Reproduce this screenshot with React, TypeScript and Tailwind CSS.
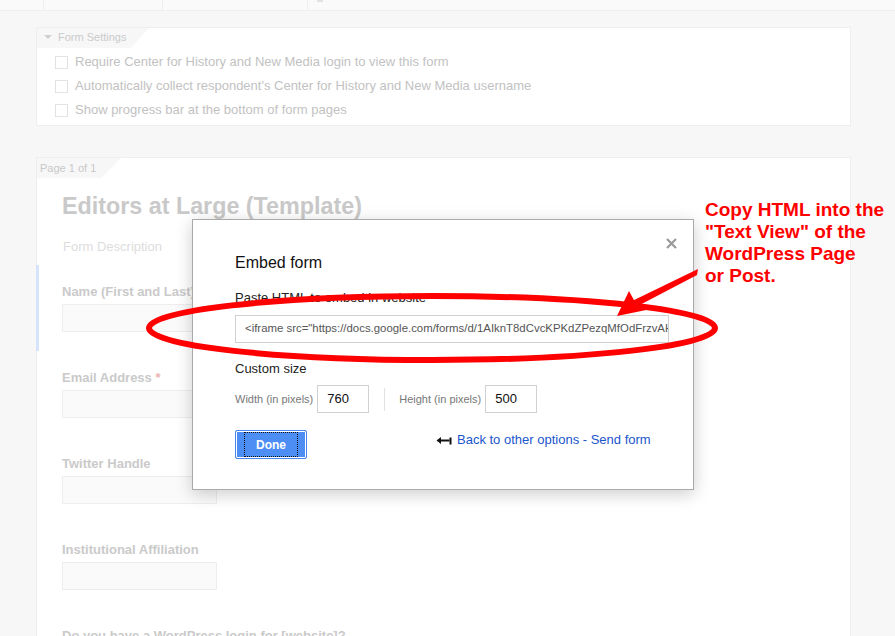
import React from "react";

const Field = ({ label, star }: { label: string; star?: boolean }) => (
  <div className="h-[86px] pt-[19px] pl-[25px]">
    <div className="h-[16px] leading-[16px] text-[13px] font-bold text-[#cacaca] whitespace-nowrap">
      {label}
      {star && <span className="text-[#eab3b3]"> *</span>}
    </div>
    <div className="mt-[4px] h-[28px] w-[155px] bg-[#fafafa] border border-[#eeeeee]" />
  </div>
);

const Check = ({ text }: { text: string }) => (
  <div className="flex items-center h-[24px]">
    <div className="w-[13px] h-[13px] border border-[#e2e2e2] bg-white" />
    <span className="ml-[7px] text-[13px] text-[#c2c2c2]">{text}</span>
  </div>
);

export default function App() {
  return (
    <div className="relative w-[895px] h-[636px] overflow-hidden bg-[#f7f7f7] font-['Liberation_Sans',Arial,sans-serif]">
      {/* top bar */}
      <div className="h-[11px] bg-[#fafafa] border-b border-[#efefef] flex">
        <div className="w-[44px] border-r border-[#efefef]" />
        <div className="w-[119px] border-r border-[#efefef]" />
        <div className="w-[145px] border-r border-[#efefef]" />
        <div className="ml-[9px] w-[6px] h-[2px] bg-[#e2e2e2]" />
      </div>

      {/* Form settings card */}
      <div className="ml-[36px] mt-[16px] w-[815px] h-[99px] bg-white border border-[#eeeeee]">
        <div className="w-[112px] h-[20px] bg-[#f7f7f7] [clip-path:polygon(0_0,100%_0,84%_100%,0_100%)] flex items-center pb-[2px]">
          <svg width="8" height="5" viewBox="0 0 8 5" className="ml-[7px]">
            <path d="M0 0 L8 0 L4 4 Z" fill="#cfcfcf" />
          </svg>
          <span className="ml-[6px] text-[11px] text-[#cbcbcb]">Form Settings</span>
        </div>
        <div className="pl-[18px] pt-[2px]">
          <Check text="Require Center for History and New Media login to view this form" />
          <Check text="Automatically collect respondent's Center for History and New Media username" />
          <Check text="Show progress bar at the bottom of form pages" />
        </div>
      </div>

      {/* Page card */}
      <div className="ml-[36px] mt-[31px] w-[815px] h-[500px] bg-white border-l border-t border-r border-[#eeeeee]">
        <div className="w-[84px] h-[20px] bg-[#f7f7f7] [clip-path:polygon(0_0,100%_0,77%_100%,0_100%)] flex items-center">
          <span className="ml-[3px] text-[11px] text-[#c9c9c9]">Page 1 of 1</span>
        </div>
        <div className="pl-[25px] mt-[15px] h-[26px] leading-[26px] text-[23.3px] font-bold text-[#c9c9c9]">
          Editors at Large (Template)
        </div>
        <div className="pl-[26px] mt-[20px] h-[16px] leading-[16px] text-[13px] text-[#dddddd]">
          Form Description
        </div>
        <div className="mt-[10px] -ml-px border-l-[3px] border-[#d5e3fb]">
          <div className="-ml-[2px]">
            <Field label="Name (First and Last)" />
          </div>
        </div>
        <Field label="Email Address" star />
        <Field label="Twitter Handle" />
        <Field label="Institutional Affiliation" />
        <Field label="Do you have a WordPress login for [website]?" />
      </div>

      {/* Modal */}
      <div className="absolute left-[192px] top-[219px] w-[502px] h-[271px] bg-white border border-[#aaaaaa] shadow-[0_4px_16px_rgba(0,0,0,0.2)]">
        <svg width="11" height="11" viewBox="0 0 11 11" className="absolute left-[473px] top-[18px]">
          <path d="M1 1 L10 10 M10 1 L1 10" stroke="#9a9a9a" strokeWidth="2.2" />
        </svg>
        <div className="pl-[42px] pt-[33px]">
          <div className="h-[20px] leading-[20px] text-[16px] text-[#111]">Embed form</div>
          <div className="mt-[17px] h-[16px] leading-[16px] text-[13px] text-[#222]">
            Paste HTML to embed in website
          </div>
          <div className="mt-[9px] w-[434px] h-[28px] border border-[#d0d0d0] flex items-center overflow-hidden">
            <span className="pl-[9px] whitespace-nowrap text-[11.4px] text-[#555]">
              &lt;iframe src="https://docs.google.com/forms/d/1AIknT8dCvcKPKdZPezqMfOdFrzvAHUc8wWsI5l9d2Xk/viewform?embedded=true"
            </span>
          </div>
          <div className="mt-[18px] h-[16px] leading-[16px] text-[13px] text-[#222]">Custom size</div>
          <div className="mt-[8px] flex items-center h-[28px]">
            <span className="text-[11px] text-[#777]">Width (in pixels)</span>
            <div className="ml-[4px] w-[52px] h-[28px] border border-[#d0d0d0] flex items-center pl-[9px] text-[13px] text-[#111]">
              760
            </div>
            <div className="ml-[15px] w-px h-[23px] bg-[#e2e2e2]" />
            <span className="ml-[14px] text-[11px] text-[#777]">Height (in pixels)</span>
            <div className="ml-[4px] w-[52px] h-[28px] border border-[#d0d0d0] flex items-center pl-[9px] text-[13px] text-[#111]">
              500
            </div>
          </div>
          <div className="mt-[17px] flex items-start">
            <div className="relative w-[72px] h-[29px] rounded-[2px] border border-[#4a87f0] bg-[#4d8ef5] shadow-[inset_0_0_0_1px_#ffffff] flex items-center justify-center">
              <span className="text-[12px] font-bold text-white">Done</span>
              <div className="absolute left-[8px] right-[8px] top-[1px] bottom-[1px] border border-dotted border-[#111]" />
            </div>
            <div className="ml-[129px] mt-[2px] flex items-center h-[16px]">
              <svg width="16" height="9" viewBox="0 0 16 9">
                <path d="M0.5 4.5 L5 1 L5 3.5 L13.5 3.5 L13.5 5.5 L5 5.5 L5 8 Z" fill="#111" />
                <rect x="13.5" y="1.5" width="2" height="7" fill="#111" />
              </svg>
              <span className="ml-[5px] text-[13px] text-[#1a55cc]">Back to other options - Send form</span>
            </div>
          </div>
        </div>
      </div>

      {/* Annotation overlay */}
      <svg width="895" height="636" className="absolute left-0 top-0 pointer-events-none">
        <ellipse cx="432" cy="328" rx="283" ry="32" fill="none" stroke="#ff0000" strokeWidth="6" />
        <path d="M698 269 L697 275 L634 308 L630 302 Z" fill="#ff0000" />
        <path d="M617 316 L629 291 L635 302 L651 309 Z" fill="#ff0000" />
      </svg>

      <div className="absolute left-[705px] top-[199px] text-[19px] leading-[22px] font-bold text-[#ff0000] whitespace-nowrap">
        <div>Copy HTML into the</div>
        <div>"Text View" of the</div>
        <div>WordPress Page</div>
        <div>or Post.</div>
      </div>
    </div>
  );
}
